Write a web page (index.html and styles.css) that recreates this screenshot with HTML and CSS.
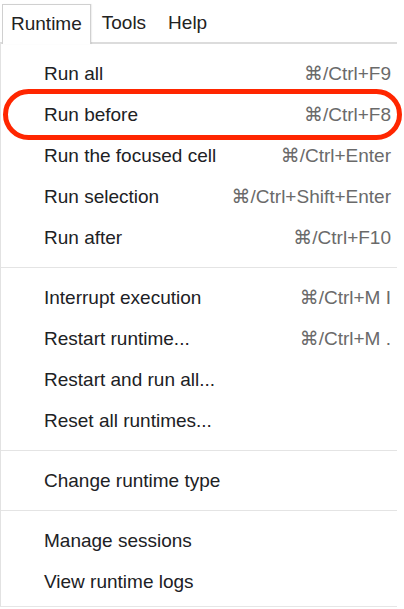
FILE: index.html
```html
<!DOCTYPE html>
<html>
<head>
<meta charset="utf-8">
<link rel="stylesheet" href="styles.css">
</head>
<body>
<div class="menubar">
  <div class="tab active">Runtime</div>
  <div class="tab">Tools</div>
  <div class="tab">Help</div>
</div>
<div class="dropdown">
  <div class="item"><span class="label">Run all</span><span class="key">⌘/Ctrl+F9</span></div>
  <div class="item highlighted"><span class="label">Run before</span><span class="key">⌘/Ctrl+F8</span><span class="ring"></span></div>
  <div class="item"><span class="label">Run the focused cell</span><span class="key">⌘/Ctrl+Enter</span></div>
  <div class="item"><span class="label">Run selection</span><span class="key">⌘/Ctrl+Shift+Enter</span></div>
  <div class="item"><span class="label">Run after</span><span class="key">⌘/Ctrl+F10</span></div>
  <div class="sep"></div>
  <div class="item"><span class="label">Interrupt execution</span><span class="key">⌘/Ctrl+M I</span></div>
  <div class="item"><span class="label">Restart runtime...</span><span class="key">⌘/Ctrl+M .</span></div>
  <div class="item"><span class="label">Restart and run all...</span></div>
  <div class="item"><span class="label">Reset all runtimes...</span></div>
  <div class="sep"></div>
  <div class="item"><span class="label">Change runtime type</span></div>
  <div class="sep"></div>
  <div class="item"><span class="label">Manage sessions</span></div>
  <div class="item"><span class="label">View runtime logs</span></div>
</div>
</body>
</html>
```
FILE: styles.css
```css
html, body {
  margin: 0;
  padding: 0;
  background: #fff;
}
body {
  font-family: "Liberation Sans", Arial, "DejaVu Sans", sans-serif;
  font-size: 19px;
  color: #202124;
  width: 404px;
}
.menubar {
  display: flex;
  align-items: flex-end;
  height: 42px;
  padding-left: 2px;
  position: relative;
  z-index: 2;
}
.tab {
  height: 38px;
  line-height: 38px;
  padding: 0 11px;
  color: #222;
}
.tab.active {
  padding: 0 8px;
  border: 1px solid #d0d0d0;
  border-bottom: none;
  background: #fff;
  height: 39px;
  line-height: 38px;
  margin-bottom: -2px;
  box-shadow: 1px 0 1px rgba(0,0,0,0.06);
}
.dropdown {
  width: 396px;
  border-left: 1px solid #e2e2e2;
  border-top: 2px solid #dcdcdc;
  border-bottom: 1px solid #e6e6e6;
  padding: 9px 0 4px 0;
  position: relative;
  z-index: 1;
}
.item {
  position: relative;
  display: flex;
  align-items: center;
  justify-content: space-between;
  height: 41px;
  padding: 0 6px 0 43px;
}
.label {
  color: #202124;
  white-space: nowrap;
}
.key {
  color: #6a6a6a;
  white-space: nowrap;
}
.sep {
  height: 1px;
  background: #e4e4e4;
  margin: 9px 0;
}
.ring {
  position: absolute;
  left: 2px;
  right: -5px;
  top: -5px;
  height: 41px;
  border: 5px solid #ff2600;
  border-radius: 26px;
  pointer-events: none;
}
```
